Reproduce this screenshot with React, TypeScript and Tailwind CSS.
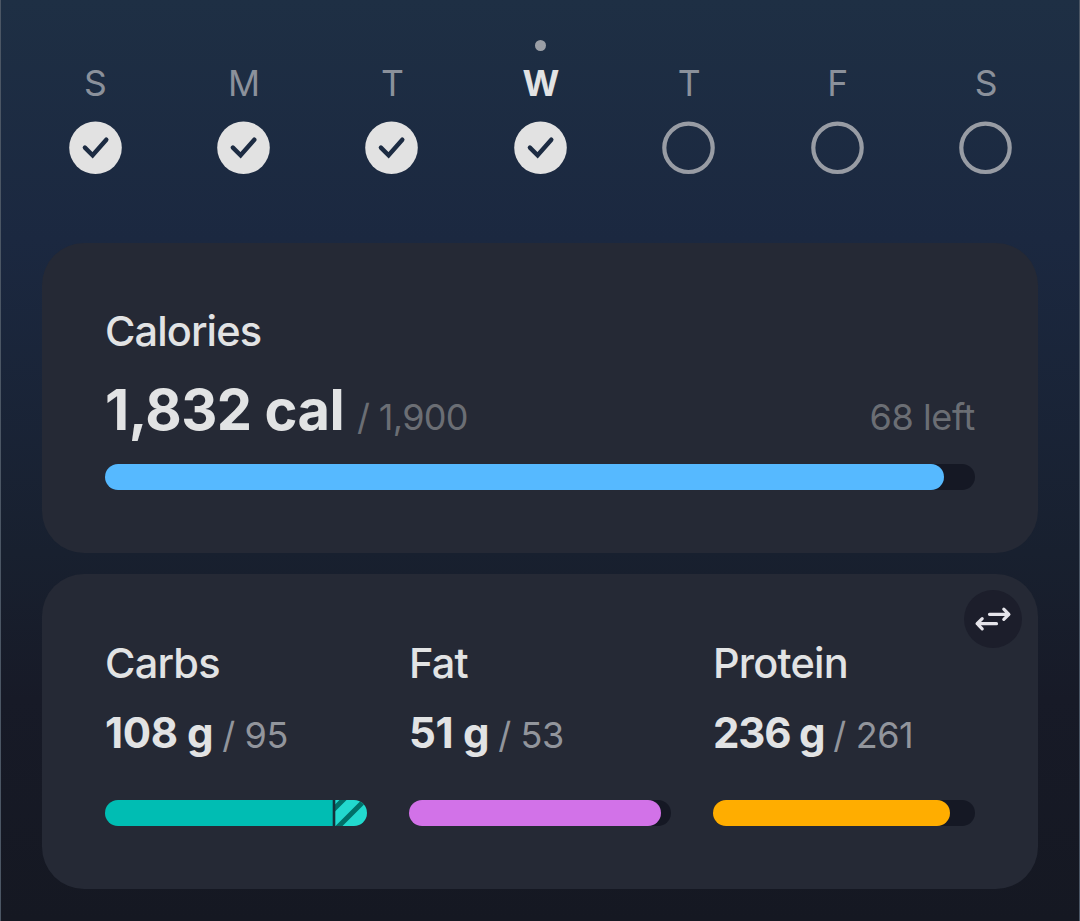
type Day = { letter: string; done: boolean; today?: boolean };

const days: Day[] = [
  { letter: "S", done: true },
  { letter: "M", done: true },
  { letter: "T", done: true },
  { letter: "W", done: true, today: true },
  { letter: "T", done: false },
  { letter: "F", done: false },
  { letter: "S", done: false },
];

function DayColumn({ day }: { day: Day }) {
  return (
    <div className="flex flex-col items-center">
      <span className={day.today ? "size-[11px] rounded-full bg-[#9b9fa6]" : "size-[11px]"} />
      <span
        className={
          day.today
            ? "mt-[15px] pl-px text-[35.5px] leading-9 font-bold text-[#e2e3e4]"
            : "mt-[15px] pl-px text-[35.5px] leading-9 font-normal text-[#8b919b]"
        }
      >
        {day.letter}
      </span>
      <svg className="mt-[19px] h-[54px] w-[53px]" viewBox="0 0 53 54" fill="none">
        {day.done ? (
          <>
            <circle cx="26.5" cy="26.8" r="26.3" fill="#e2e2e2" />
            <path
              d="M15.9 26.6 L23.6 34.3 L37.3 18.7"
              stroke="#1c2b42"
              strokeWidth="4.4"
              strokeLinecap="round"
              strokeLinejoin="miter"
            />
          </>
        ) : (
          <circle cx="26.5" cy="26.8" r="24.2" stroke="#989ca4" strokeWidth="4.2" />
        )}
      </svg>
    </div>
  );
}

function CarbsBar() {
  return (
    <svg className="mt-[40px] h-[26px] w-[262px]" viewBox="0 0 262 26">
      <defs>
        <clipPath id="pill">
          <rect width="262" height="26" rx="13" />
        </clipPath>
      </defs>
      <g clipPath="url(#pill)">
        <rect x="229" width="33" height="26" fill="#22d9ce" />
        <path d="M222 16 L246 -8 M228 32 L268 -8" stroke="#007068" strokeWidth="5" />
        <rect width="228" height="26" fill="#00bdb3" />
        <rect x="227.7" width="2.6" height="26" fill="#15303b" />
      </g>
    </svg>
  );
}

type MacroProps = { name: string; value: string; goal: string; tracking: string; bar: React.ReactNode };

function Macro({ name, value, goal, tracking, bar }: MacroProps) {
  return (
    <div className="flex flex-col">
      <h2 className="text-[41.5px] leading-[50px] font-medium tracking-[-0.8px] text-[#e2e3e4]">{name}</h2>
      <div className="mt-[20px] flex items-baseline leading-[50px] whitespace-nowrap">
        <span className={`text-[42px] font-bold text-[#e2e3e4] ${tracking}`}>{value}</span>
        <span className="ml-[9px] text-[36px] tracking-[-0.4px] text-[#92959c]">/ {goal}</span>
      </div>
      {bar}
    </div>
  );
}

export default function App() {
  return (
    <main className="flex h-[921px] w-[1080px] flex-col overflow-hidden border-x border-[#4b5664] bg-[linear-gradient(to_bottom,#1e2f44,#1b2840_26%,#18202f_60%,#171a27_76%,#151822)] font-[Inter,sans-serif]">
      <div className="mr-[19.2px] ml-[19.8px] grid h-[243px] grid-cols-7 pt-[40px]">
        {days.map((day, i) => (
          <DayColumn key={i} day={day} />
        ))}
      </div>

      <section className="mx-[41px] h-[310px] rounded-[42px] bg-[#252935] px-[63px] pt-[63px]">
        <h2 className="text-[41.5px] leading-[50px] font-medium tracking-[-0.9px] text-[#e2e3e4]">Calories</h2>
        <div className="mt-[20px] flex h-[68px] items-baseline leading-[68px]">
          <span className="text-[56px] font-bold tracking-[-0.5px] text-[#e2e3e4]">1,832 cal</span>
          <span className="ml-[13px] text-[36px] tracking-[-0.7px] text-[#6b6e74]">/ 1,900</span>
          <span className="ml-auto text-[36px] tracking-[-0.4px] text-[#6b6e74]">68 left</span>
        </div>
        <div className="mt-[20px] h-[26px] rounded-full bg-[#151824]">
          <div className="h-full w-[839px] rounded-full bg-[#56b9ff]" />
        </div>
      </section>

      <section className="relative mx-[41px] mt-[21px] h-[315px] rounded-[42px] bg-[#252935] px-[63px] pt-[64px]">
        <button
          aria-label="Switch view"
          className="absolute top-[16px] right-[16px] flex size-[58px] items-center justify-center rounded-full bg-[#1c1e2b]"
        >
          <svg
            className="size-[58px]"
            viewBox="0 0 58 58"
            fill="none"
            stroke="#e5e4ea"
            strokeWidth="3.2"
            strokeLinecap="round"
            strokeLinejoin="round"
          >
            <path d="M25.5 24.3 H44.6 M39.8 19.2 L44.9 24.3 L39.8 29.4" />
            <path d="M32.5 33.7 H13.4 M18.2 28.6 L13.1 33.7 L18.2 38.8" />
          </svg>
        </button>
        <div className="grid grid-cols-3 gap-[42px]">
          <Macro name="Carbs" value="108 g" goal="95" tracking="tracking-[-0.4px]" bar={<CarbsBar />} />
          <Macro
            name="Fat"
            value="51 g"
            goal="53"
            tracking="tracking-[-0.3px]"
            bar={
              <div className="mt-[40px] h-[26px] rounded-full bg-[#151824]">
                <div className="h-full w-[252px] rounded-full bg-[#d272e8]" />
              </div>
            }
          />
          <Macro
            name="Protein"
            value="236 g"
            goal="261"
            tracking="tracking-[-1.2px]"
            bar={
              <div className="mt-[40px] h-[26px] rounded-full bg-[#151824]">
                <div className="h-full w-[237px] rounded-full bg-[#ffad00]" />
              </div>
            }
          />
        </div>
      </section>
    </main>
  );
}
